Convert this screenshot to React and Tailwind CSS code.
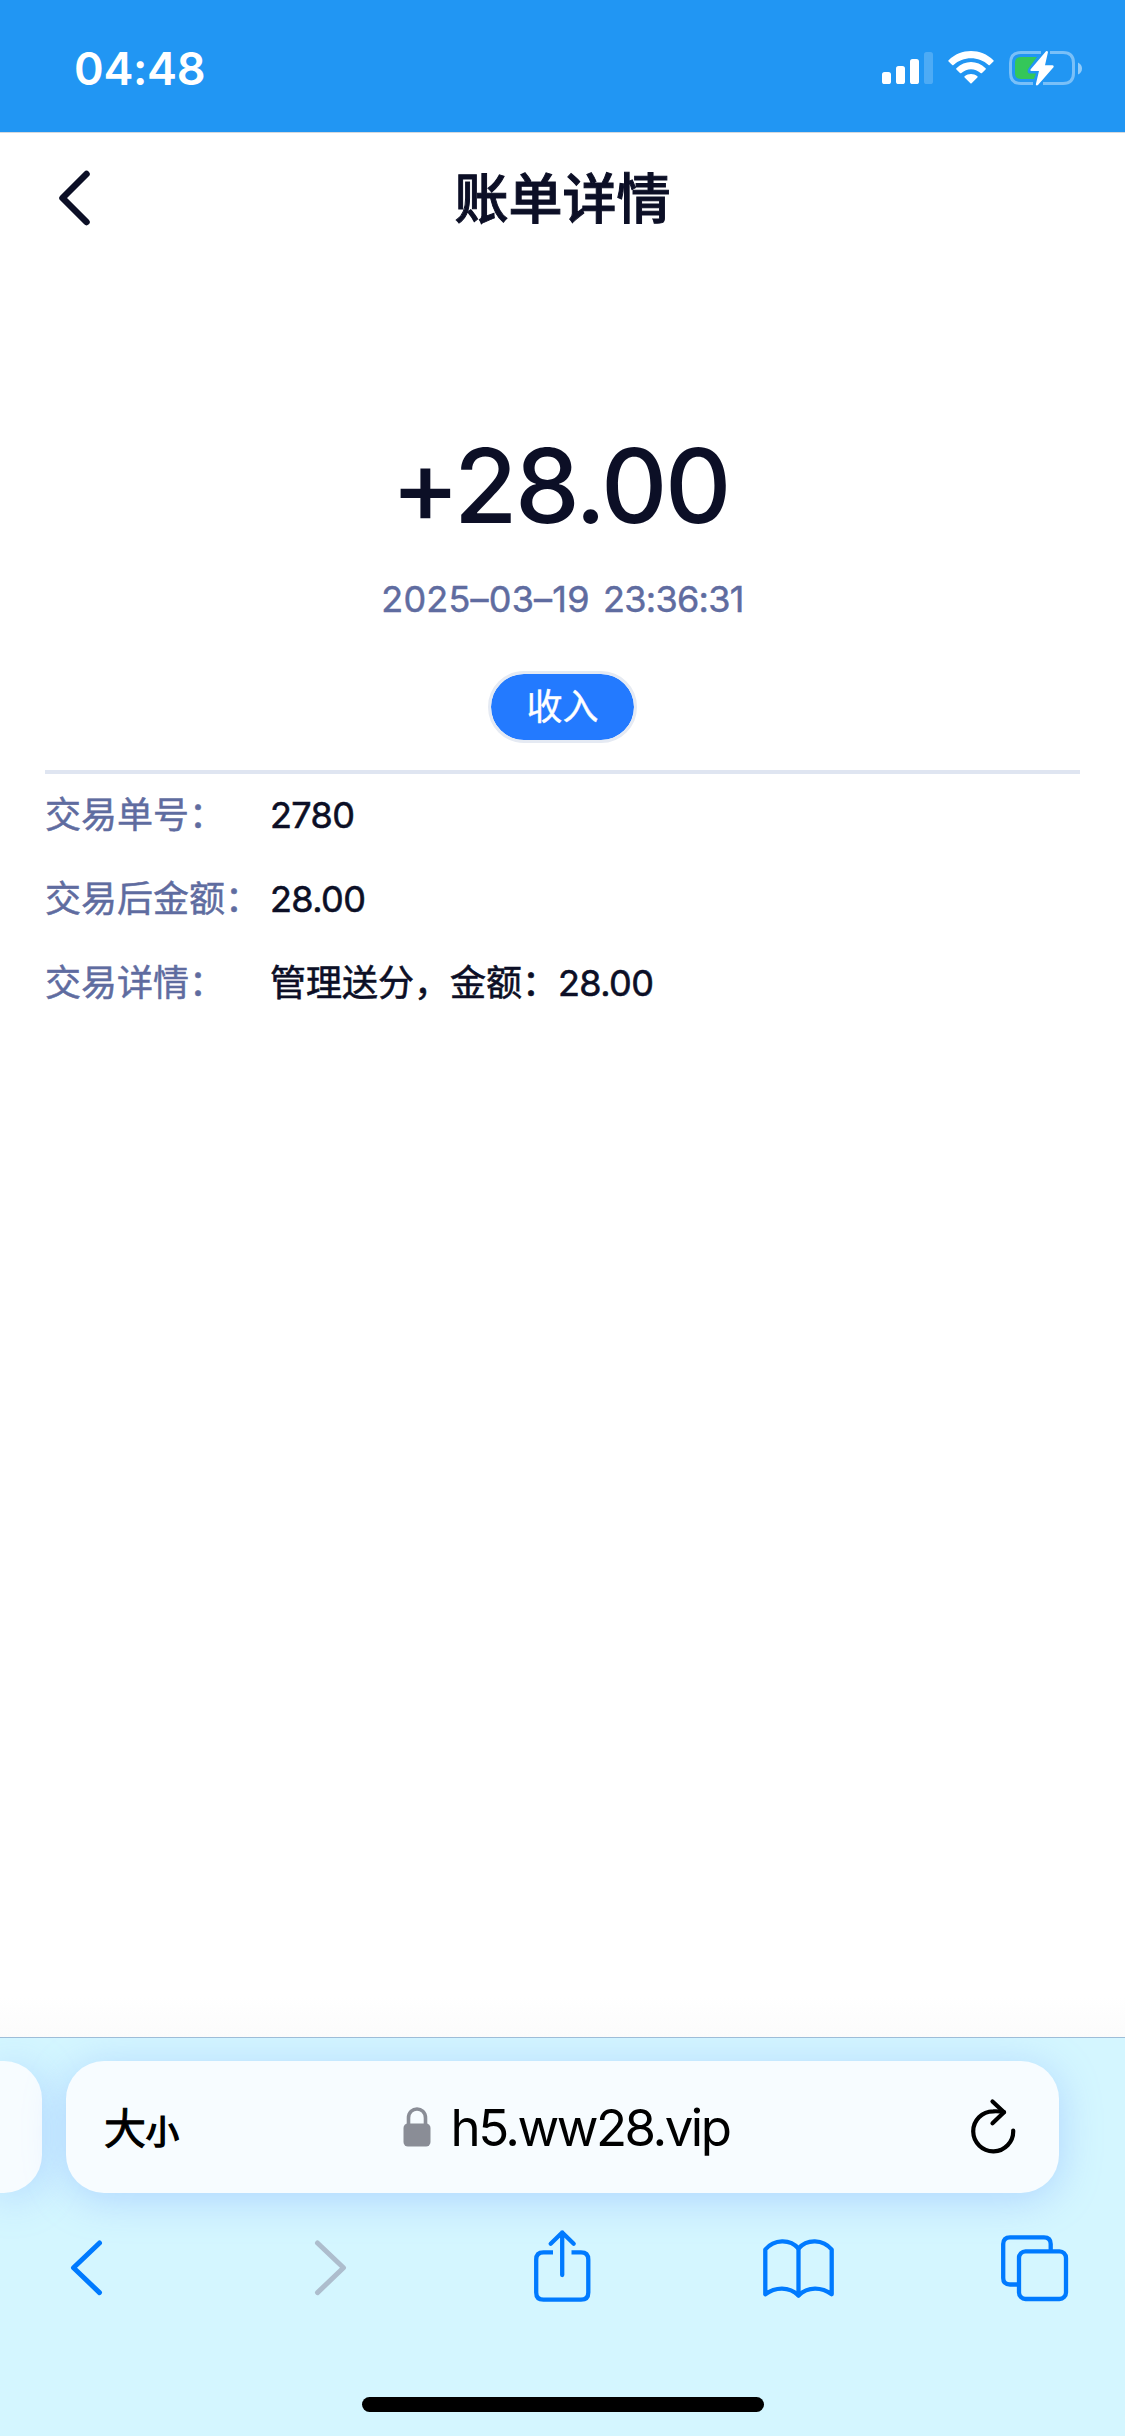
import React from 'react';

const details = [
  { label: '交易单号：', text: '', amount: '2780' },
  { label: '交易后金额：', text: '', amount: '28.00' },
  { label: '交易详情：', text: '管理送分，金额：', amount: '28.00' },
];

function StatusBar() {
  return (
    <div className="h-[133px] shrink-0 bg-[#2196f3] border-b border-[#d5d9de] flex items-center justify-between pl-[74px] pr-[42px] pt-1">
      <span className="text-white text-[45px] leading-[56px] font-semibold tracking-[-0.3px] pt-0.5">04:48</span>
      <div className="flex items-center gap-[15px]">
        {/* Signal */}
        <svg className="w-[51px] h-9" viewBox="0 0 51 36" fill="white">
          <rect x="0" y="22" width="9" height="12" rx="2.6" />
          <rect x="14" y="16" width="9" height="18" rx="2.6" />
          <rect x="28" y="9" width="9" height="25" rx="2.6" />
          <rect x="42" y="2" width="9" height="32" rx="2.6" opacity="0.2" />
        </svg>
        {/* Wifi */}
        <svg className="w-[46px] h-9" viewBox="0 0 46 36" fill="white">
          <path d="M0.6 10.2 C13 -2 33 -2 45.4 10.2 Q46 10.9 45.4 11.5 L41.8 15 Q41.2 15.5 40.5 15 C31 5.9 15 5.9 5.5 15 Q4.8 15.5 4.2 15 L0.6 11.5 Q0 10.9 0.6 10.2 Z" />
          <path d="M8.4 18.2 C17 10 29 10 37.6 18.2 Q38.2 18.8 37.6 19.4 L34 23 Q33.3 23.5 32.6 23 C27 17.9 19 17.9 13.4 23 Q12.7 23.5 12 23 L8.4 19.4 Q7.8 18.8 8.4 18.2 Z" />
          <path d="M16.6 26.2 C20.4 23.4 25.6 23.4 29.4 26.2 Q30 26.8 29.4 27.4 L23.6 33.2 Q23 33.8 22.4 33.2 L16.6 27.4 Q16 26.8 16.6 26.2 Z" />
        </svg>
        {/* Battery */}
        <svg className="w-[74px] h-9" viewBox="0 0 74 36" fill="none">
          <path d="M32 2.5 H12 Q1.5 2.5 1.5 13 V23 Q1.5 33.5 12 33.5 H24" stroke="white" strokeOpacity="0.4" strokeWidth="3" />
          <path d="M41 2.5 H54 Q64.5 2.5 64.5 13 V23 Q64.5 33.5 54 33.5 H34" stroke="white" strokeOpacity="0.4" strokeWidth="3" />
          <path d="M69 12.5 Q73 14.5 73 18.5 Q73 22.5 69 24.5 Z" fill="white" fillOpacity="0.5" />
          <path d="M28 7 H12 Q6 7 6 13 V23 Q6 29 12 29 H25 L27 23.5 H20 Q17.5 22 19.5 18.5 Z" fill="#34c759" />
          <path d="M37 1.2 L21.5 19.5 Q21 21 22.5 21 H30 L26.8 34.5 Q27.5 36 29 35 L44.7 17 Q45 15.5 43.5 15.3 H36 L39 2 Q38.5 0.5 37 1.2 Z" fill="white" />
        </svg>
      </div>
    </div>
  );
}

function Header() {
  return (
    <header className="grid grid-cols-[1fr_auto_1fr] items-center h-[132px] px-[56px]">
      <svg className="w-9 h-[60px] mb-[3px]" viewBox="0 0 36 60" fill="none" stroke="#0c0f26" strokeWidth="6.5" strokeLinecap="round" strokeLinejoin="round">
        <path d="M30.5 6 L6.5 30 L30.5 54" />
      </svg>
      <h1 className="pt-0.5 text-[54px] leading-[72px] font-medium [-webkit-text-stroke:1px_#0c0f26]">账单详情</h1>
      <span />
    </header>
  );
}

function AddressBar() {
  return (
    <div className="flex gap-6 h-[132px]">
      <div className="w-[42px] rounded-r-[38px] bg-[#f7fcff] shadow-[0_6px_40px_rgba(120,165,255,0.4)]" />
      <div className="w-[993px] rounded-[38px] bg-[#f7fcff] shadow-[0_6px_40px_rgba(120,165,255,0.4)] flex items-center justify-between pl-[38px] pr-[42px] text-black">
        <div className="flex items-baseline w-[200px] pt-[7px]">
          <span className="text-[42px] leading-[60px] [-webkit-text-stroke:1px_black]">大</span>
          <span className="text-[33px] leading-[60px] [-webkit-text-stroke:1.6px_black]">小</span>
        </div>
        <div className="flex items-center gap-5 pl-[11px]">
          <svg className="w-7 h-10" viewBox="0 0 28 40" fill="none">
            <path d="M5.5 18 V11 C5.5 -1 22.5 -1 22.5 11 V18" stroke="#8a8d96" strokeWidth="3.6" />
            <rect x="0.5" y="16.5" width="27" height="23" rx="4.5" fill="#8a8d96" />
          </svg>
          <span className="pt-0.5 text-[51px] leading-[60px] tracking-[-2.5px]">h5.ww28.vip</span>
        </div>
        <div className="w-[200px] flex justify-end">
          <svg className="w-[46px] h-[56px] mb-[3px]" viewBox="0 0 46 56" fill="none" stroke="black" strokeWidth="4.2" strokeLinecap="round" strokeLinejoin="round">
            <path d="M42.2 32.5 A20 20 0 1 1 22.2 13.3 Q28 13 33 14" />
            <path d="M21.5 3.5 L33 14.3 L21.5 25.3" />
          </svg>
        </div>
      </div>
    </div>
  );
}

function Toolbar() {
  const icon = 'w-[72px] h-20';
  return (
    <nav className="flex justify-between w-[1020px] ml-[50px] mt-[33px] text-[#007aff]">
      <svg className={icon} viewBox="0 0 72 80" fill="none" stroke="currentColor" strokeWidth="5" strokeLinecap="round" strokeLinejoin="round">
        <path d="M49.5 17 L23.5 41.8 L49.5 66.6" />
      </svg>
      <svg className={icon} viewBox="0 0 72 80" fill="none" stroke="#adbdcd" strokeWidth="5" strokeLinecap="round" strokeLinejoin="round">
        <path d="M30.5 17 L56.5 41.8 L30.5 66.6" />
      </svg>
      <svg className={icon} viewBox="0 0 72 80" fill="none" stroke="currentColor" strokeWidth="4.3">
        <path d="M29 26.3 H19.5 Q12.2 26.3 12.2 33.5 V66.5 Q12.2 73.7 19.5 73.7 H57 Q64.3 73.7 64.3 66.5 V33.5 Q64.3 26.3 57 26.3 H47.5" />
        <path d="M38.2 6.5 V49 M26.7 17.7 L38.2 6.5 L49.7 17.7" strokeLinecap="round" strokeLinejoin="round" />
      </svg>
      <svg className={`${icon} overflow-visible`} viewBox="0 0 72 80" fill="none" stroke="currentColor" strokeWidth="4.3" strokeLinecap="round" strokeLinejoin="round">
        <path d="M4.3 23.5 C13 13 29 12.5 37.5 22.5 C46 12.5 62 13 70.7 23.5 V68.3 C61 61 47 60 37.5 69.5 C28 60 14 61 4.3 68.3 Z" />
        <path d="M37.5 22.5 V69.5" />
      </svg>
      <svg className={icon} viewBox="0 0 72 80" fill="none" stroke="currentColor" strokeWidth="4.3">
        <path d="M52.7 25 V18 Q52.7 11.3 46 11.3 H12 Q5.2 11.3 5.2 18 V52 Q5.2 58.5 12 58.5 H20" />
        <rect x="21" y="25.4" width="47" height="47.6" rx="6.5" />
      </svg>
    </nav>
  );
}

export default function App() {
  return (
    <div className="w-full h-[2436px] flex flex-col overflow-hidden bg-white text-[#0c0f26] font-['Inter','Noto_Sans_CJK_SC',sans-serif]">
      <StatusBar />
      <Header />

      <main className="flex-1 flex flex-col px-[45px] pt-[159px] bg-[linear-gradient(to_top,#fbfbfb,#ffffff_40px)]">
        <section className="flex flex-col items-center">
          <div className="pr-[5px] text-[103px] leading-[124px] font-medium tracking-[-2.5px]">+28.00</div>
          <div className="mt-[26px] text-[36px] leading-[50px] tracking-[0.2px] [word-spacing:3px] text-[#5f6ca0] whitespace-nowrap [-webkit-text-stroke:0.5px_#5f6ca0]">
            2025–03–19 <span className="tracking-[-0.7px]">23:36:31</span>
          </div>
          <div className="mt-[47px] w-[149px] h-[72px] rounded-full border-[3px] border-[#e5eaf3] bg-[#237aff] bg-clip-padding text-white text-[36px] leading-[66px] text-center [-webkit-text-stroke:0.4px_white]">收入</div>
        </section>

        <section className="mt-[27px] border-t-[4px] border-[#dfe5f1]">
          <div className="-mt-px">
            {details.map((item) => (
              <div key={item.label} className="flex items-center h-[84px] text-[36px] leading-[50px]">
                <span className="w-[225px] text-[#5f6ca0] whitespace-nowrap [-webkit-text-stroke:0.5px_#5f6ca0]">{item.label}</span>
                <span className="[-webkit-text-stroke:0.6px_#0c0f26]">
                  {item.text}
                  <span className="tracking-[-0.6px]">{item.amount}</span>
                </span>
              </div>
            ))}
          </div>
        </section>
      </main>

      <footer className="h-[399px] shrink-0 overflow-hidden border-t border-[#9dbdd8] bg-[#d4f6ff] pt-[23px]">
        <AddressBar />
        <Toolbar />
        <div className="mx-auto mt-[91px] w-[402px] h-[15px] rounded-full bg-black" />
      </footer>
    </div>
  );
}
